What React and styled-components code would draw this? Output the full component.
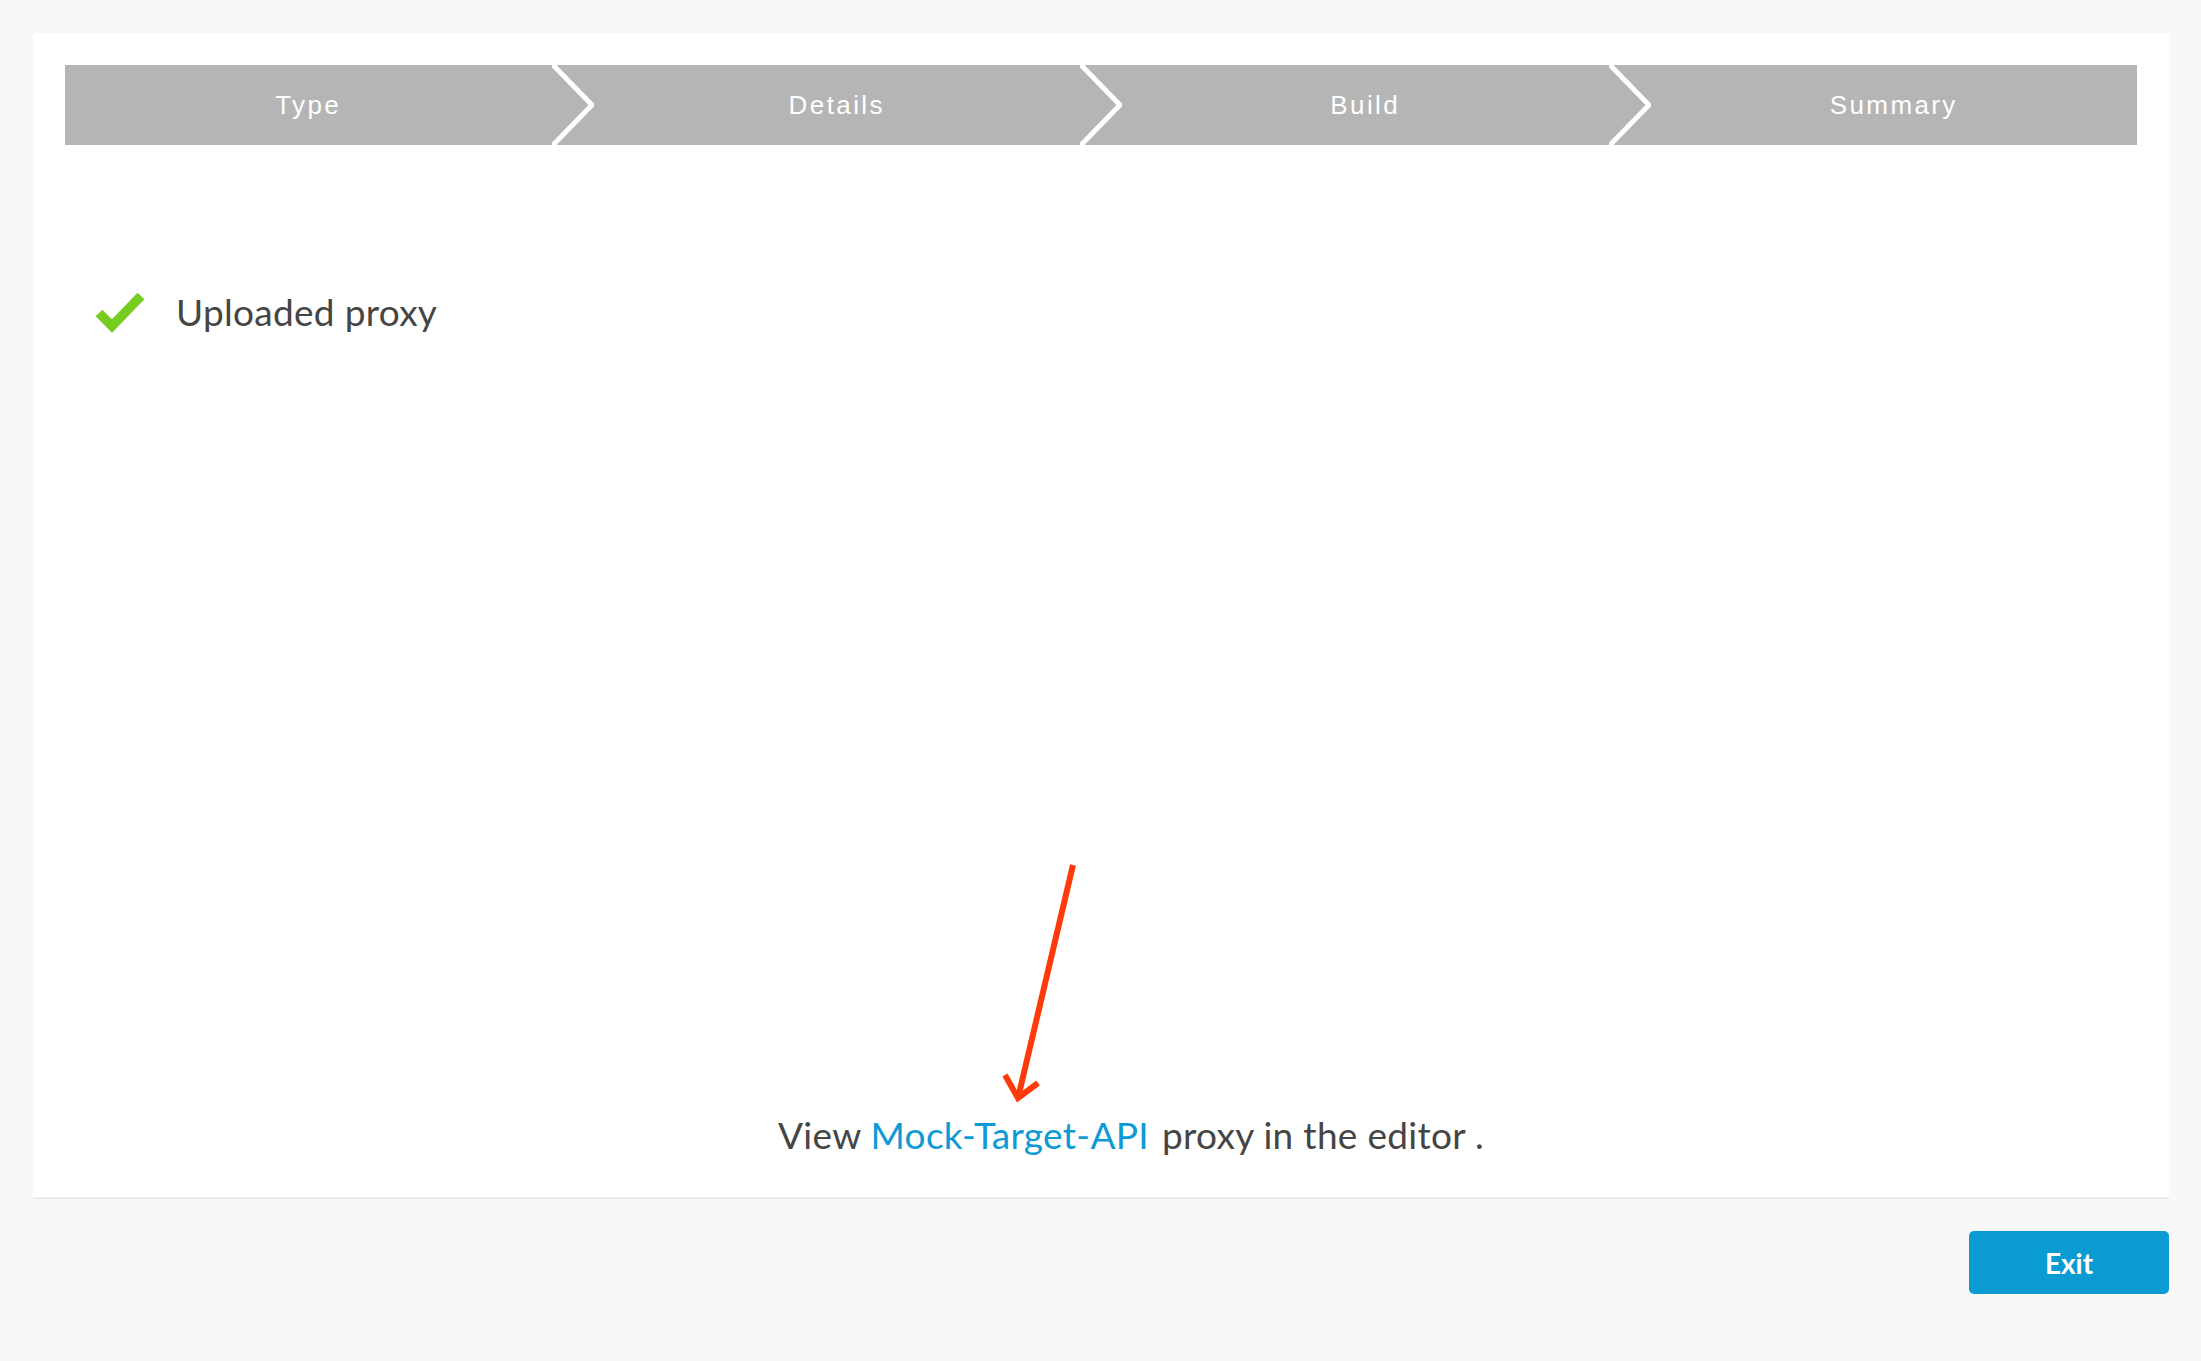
import React from "react";
import styled, { createGlobalStyle } from "styled-components";

const GlobalStyle = createGlobalStyle`
  html, body {
    margin: 0;
    padding: 0;
    background: #f7f8f8;
  }
  body {
    font-family: Lato, "Open Sans", sans-serif;
  }
`;

const steps = ["Type", "Details", "Build", "Summary"];

const Page = styled.div`
  width: 2201px;
  min-height: 1361px;
  box-sizing: border-box;
  padding: 33px 32px 0 33px;
`;

const Card = styled.section`
  position: relative;
  height: 1166px;
  box-sizing: border-box;
  background: #fff;
  border-bottom: 2px solid #ececec;
  padding: 32px 32px 0 32px;
  display: flex;
  flex-direction: column;
`;

const StepBar = styled.div`
  display: flex;
  height: 80px;
  background: #b5b5b5;
`;

const Step = styled.div`
  flex: 1;
  display: flex;
  align-items: center;
  justify-content: center;
  color: #fff;
  font-family: "Liberation Sans", Arial, sans-serif;
  font-size: 26px;
  letter-spacing: 2.4px;
`;

const Chevron = styled.svg`
  flex: 0 0 42px;
  height: 80px;
  display: block;
`;

const StatusRow = styled.div`
  display: flex;
  align-items: center;
  gap: 30px;
  margin-top: 144px;
  padding-left: 29px;
`;

const StatusText = styled.span`
  font-size: 37px;
  color: #454545;
  letter-spacing: 0.3px;
`;

const Spacer = styled.div`
  flex: 1;
`;

const Message = styled.p`
  margin: 0 0 40px 60px;
  text-align: center;
  font-size: 37px;
  color: #454545;
  letter-spacing: 0.3px;
`;

const Link = styled.a`
  color: #0e9ad6;
  text-decoration: none;
  margin-right: 13px;
`;

const Annotation = styled.svg`
  position: absolute;
  left: 957px;
  top: 827px;
`;

const Footer = styled.div`
  display: flex;
  justify-content: flex-end;
  padding-top: 32px;
`;

const ExitButton = styled.button`
  width: 200px;
  height: 63px;
  border: none;
  border-radius: 5px;
  background: #0b9bd3;
  color: #fff;
  font-family: Lato, sans-serif;
  font-weight: 700;
  font-size: 28px;
  cursor: pointer;
`;

const CheckIcon = () => (
  <svg width="52" height="44" viewBox="0 0 52 44">
    <polyline
      points="5,23 18,36 47,6"
      fill="none"
      stroke="#76cc1f"
      strokeWidth="9.5"
      strokeLinejoin="miter"
    />
  </svg>
);

const App = () => {
  return (
    <>
      <GlobalStyle />
      <Page>
        <Card>
          <StepBar>
            {steps.map((s, i) => (
              <React.Fragment key={s}>
                <Step>{s}</Step>
                {i < steps.length - 1 && (
                  <Chevron viewBox="0 0 42 80">
                    <polyline
                      points="-1,-2 40,40 -1,82"
                      fill="none"
                      stroke="#fff"
                      strokeWidth="5"
                    />
                  </Chevron>
                )}
              </React.Fragment>
            ))}
          </StepBar>

          <StatusRow>
            <CheckIcon />
            <StatusText>Uploaded proxy</StatusText>
          </StatusRow>

          <Spacer />

          <Message>
            View <Link href="#">Mock-Target-API</Link>proxy in the editor .
          </Message>

          <Annotation width="90" height="245" viewBox="0 0 90 245">
            <g fill="none" stroke="#ff3a0a" strokeWidth="6" strokeLinecap="butt">
              <line x1="83" y1="5" x2="28" y2="238" />
              <polyline points="15,215 28,238 48,223" strokeLinejoin="miter" />
            </g>
          </Annotation>
        </Card>
        <Footer>
          <ExitButton>Exit</ExitButton>
        </Footer>
      </Page>
    </>
  );
};

export default App;
